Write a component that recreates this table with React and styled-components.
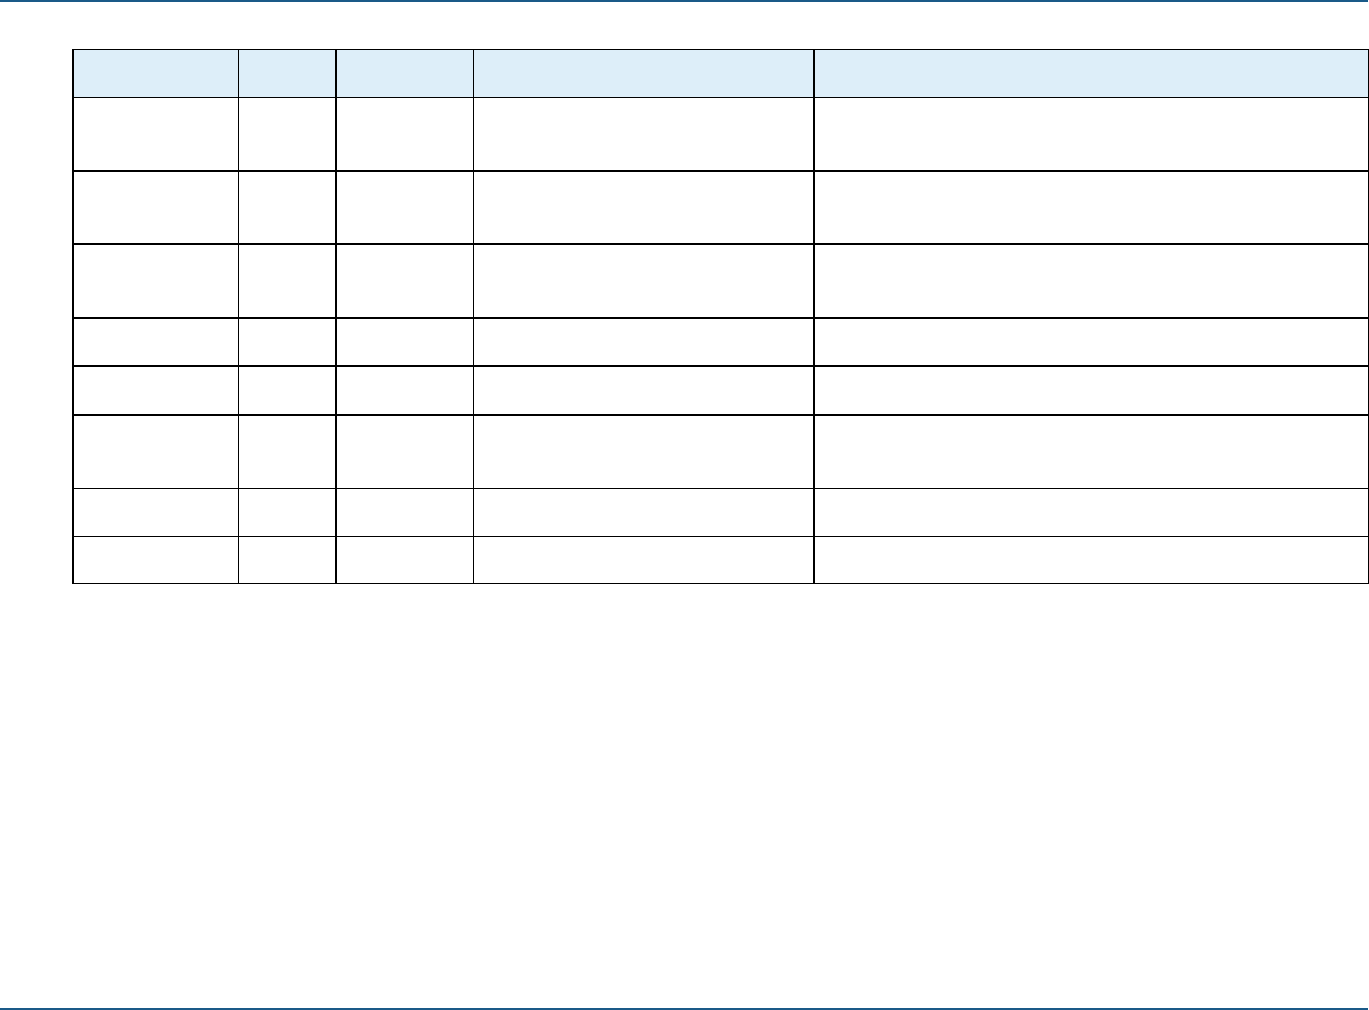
import React from 'react'
import styled, { createGlobalStyle } from "styled-components";

const GlobalStyle = createGlobalStyle`
  html, body {
    margin: 0;
    padding: 0;
    background: #ffffff;
    font-family: "Liberation Sans", Arial, sans-serif;
  }
`

// widths of the five columns, and which divider on their left is heavy
const columns = [
  { width: 165, heavy: true },
  { width: 98, heavy: false },
  { width: 137, heavy: true },
  { width: 341, heavy: false },
  { width: 554, heavy: true },
]

const rows = [
  { height: 72, heavyBottom: true },
  { height: 71, heavyBottom: true },
  { height: 72, heavyBottom: true },
  { height: 46, heavyBottom: true },
  { height: 47, heavyBottom: true },
  { height: 72, heavyBottom: false },
  { height: 47, heavyBottom: false },
  { height: 46, heavyBottom: false },
]

const SpecTable = () => {
  return (
    <Page>
      <GlobalStyle />
      <TopRule />
      <Content>
        <Table>
          <colgroup>
            {columns.map((c, i) => (
              <col key={i} style={{ width: c.width }} />
            ))}
          </colgroup>
          <thead>
            <tr>
              {columns.map((c, i) => (
                <HeadCell key={i} $heavyLeft={c.heavy} />
              ))}
            </tr>
          </thead>
          <tbody>
            {rows.map((r, ri) => (
              <tr key={ri}>
                {columns.map((c, ci) => (
                  <BodyCell
                    key={ci}
                    $h={r.height}
                    $heavyLeft={c.heavy}
                    $heavyBottom={r.heavyBottom}
                  />
                ))}
              </tr>
            ))}
          </tbody>
        </Table>
      </Content>
      <BottomRule />
    </Page>
  )
}

export const Page = styled.div`
  min-height: 1010px;
  display: flex;
  flex-direction: column;
`

export const TopRule = styled.div`
  height: 2px;
  margin-right: 1px;
  background: #1a5a88;
`

export const Content = styled.main`
  flex: 1;
  padding: 47px 0 0 72px;
`

export const Table = styled.table`
  border-collapse: collapse;
  table-layout: fixed;
  width: 1295px;
`

export const HeadCell = styled.th`
  height: 47px;
  padding: 0;
  background: #ddeef9;
  border-top: 1px solid #000;
  border-bottom: 1px solid #000;
  border-right: 1px solid #000;
  border-left: ${p => (p.$heavyLeft ? "2px" : "1px")} solid #000;
`

export const BodyCell = styled.td`
  height: ${p => p.$h}px;
  padding: 0;
  border-right: 1px solid #000;
  border-left: ${p => (p.$heavyLeft ? "2px" : "1px")} solid #000;
  border-bottom: ${p => (p.$heavyBottom ? "2px" : "1px")} solid #000;
`

export const BottomRule = styled.div`
  height: 2px;
  margin-right: 1px;
  background: #1a5a88;
`

export default SpecTable
